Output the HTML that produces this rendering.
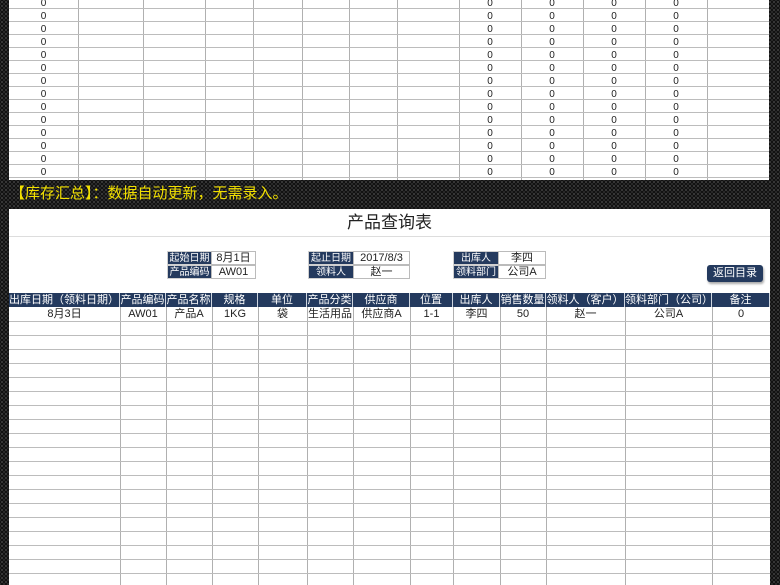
<!DOCTYPE html>
<html><head><meta charset="utf-8"><style>
*{margin:0;padding:0;box-sizing:border-box}
body{width:780px;height:585px;overflow:hidden;position:relative;font-family:"Liberation Sans","Noto Sans CJK SC",sans-serif;
background-color:#111;background-image:radial-gradient(circle,#3a3a3a 0.9px,transparent 1.3px),radial-gradient(circle,#2a2a2a 0.9px,transparent 1.3px);background-size:4px 4px;background-position:0 0,2px 2px}
.abs{position:absolute}
.panel{position:absolute;background:#fff}
.vl{position:absolute;width:1px;background:#b0b0b0}
.hl{position:absolute;height:1px;background:#bcbcbc}
.t{position:absolute;font-size:10px;color:#222;text-align:center;line-height:13px}
.lab{position:absolute;background:#243a5e;color:#fff;font-size:10px;text-align:center;line-height:13px;height:14px;border:1px solid #d0d0d0;white-space:nowrap;overflow:hidden}
.val{position:absolute;background:#fff;color:#222;font-size:11px;text-align:center;line-height:13px;height:14px;border:1px solid #bbb;white-space:nowrap}
.hd{position:absolute;top:293px;height:14px;background:#243a5e;color:#fff;font-size:11px;text-align:center;line-height:14px;border-right:1px solid #cfd6e0;white-space:nowrap;overflow:hidden}
.dc{position:absolute;top:307px;height:14px;font-size:11px;color:#222;text-align:center;line-height:15px}
</style></head><body>
<div class="panel" style="left:9px;top:0;width:760px;height:180px"></div>
<div id="top"></div>
<div class="abs" style="left:10px;top:183px;font-size:15px;color:#f2e000;line-height:22px">【库存汇总】：数据自动更新，无需录入。</div>
<div class="panel" style="left:9px;top:209px;width:761px;height:376px"></div>
<div class="abs" style="left:9px;top:212px;width:761px;text-align:center;font-size:17px;color:#222;line-height:22px">产品查询表</div>
<div class="hl" style="left:9px;top:236px;width:761px;background:#ddd"></div>
<div class="lab" style="left:167px;top:251px;width:45px">起始日期</div><div class="val" style="left:211px;top:251px;width:45px">8月1日</div>
<div class="lab" style="left:167px;top:265px;width:45px">产品编码</div><div class="val" style="left:211px;top:265px;width:45px">AW01</div>
<div class="lab" style="left:308px;top:251px;width:46px">起止日期</div><div class="val" style="left:353px;top:251px;width:57px">2017/8/3</div>
<div class="lab" style="left:308px;top:265px;width:46px">领料人</div><div class="val" style="left:353px;top:265px;width:57px">赵一</div>
<div class="lab" style="left:453px;top:251px;width:46px">出库人</div><div class="val" style="left:498px;top:251px;width:48px">李四</div>
<div class="lab" style="left:453px;top:265px;width:46px">领料部门</div><div class="val" style="left:498px;top:265px;width:48px">公司A</div>
<div class="abs" style="left:707px;top:265px;width:56px;height:17px;background:#243a5e;color:#fff;font-size:11px;text-align:center;line-height:17px;border-radius:3px;box-shadow:1px 2px 2px #aaa">返回目录</div>
<div id="bot"></div>
<script>
var tc=[9,78,143,205,253,302,349,397,459,521,583,645,707,769];
var h='';
for(var i=1;i<tc.length-1;i++)h+='<div class="vl" style="left:'+tc[i]+'px;top:0;height:180px"></div>';
for(var r=0;r<14;r++){var y=-5+13*r;h+='<div class="hl" style="left:9px;top:'+(y+13)+'px;width:760px"></div>';
[459,521,583,645].forEach(function(x,j){h+='<div class="t" style="left:'+x+'px;top:'+(y+2)+'px;width:62px">0</div>'});
h+='<div class="t" style="left:9px;top:'+(y+2)+'px;width:69px">0</div>';}
document.getElementById('top').innerHTML=h;
var bc=[9,120,166,212,258,307,353,410,453,500,546,625,712,770];
var hd=['出库日期（领料日期）','产品编码','产品名称','规格','单位','产品分类','供应商','位置','出库人','销售数量','领料人（客户）','领料部门（公司）','备注'];
var dv=['8月3日','AW01','产品A','1KG','袋','生活用品','供应商A','1-1','李四','50','赵一','公司A','0'];
var b='';
for(var i=1;i<bc.length-1;i++)b+='<div class="vl" style="left:'+bc[i]+'px;top:307px;height:278px"></div>';
for(var y=321;y<585;y+=14)b+='<div class="hl" style="left:9px;top:'+y+'px;width:761px"></div>';
for(var i=0;i<13;i++){var w=bc[i+1]-bc[i];b+='<div class="hd" style="left:'+bc[i]+'px;width:'+w+'px">'+hd[i]+'</div><div class="dc" style="left:'+bc[i]+'px;width:'+w+'px">'+dv[i]+'</div>';}
document.getElementById('bot').innerHTML=b;
</script>
</body></html>
